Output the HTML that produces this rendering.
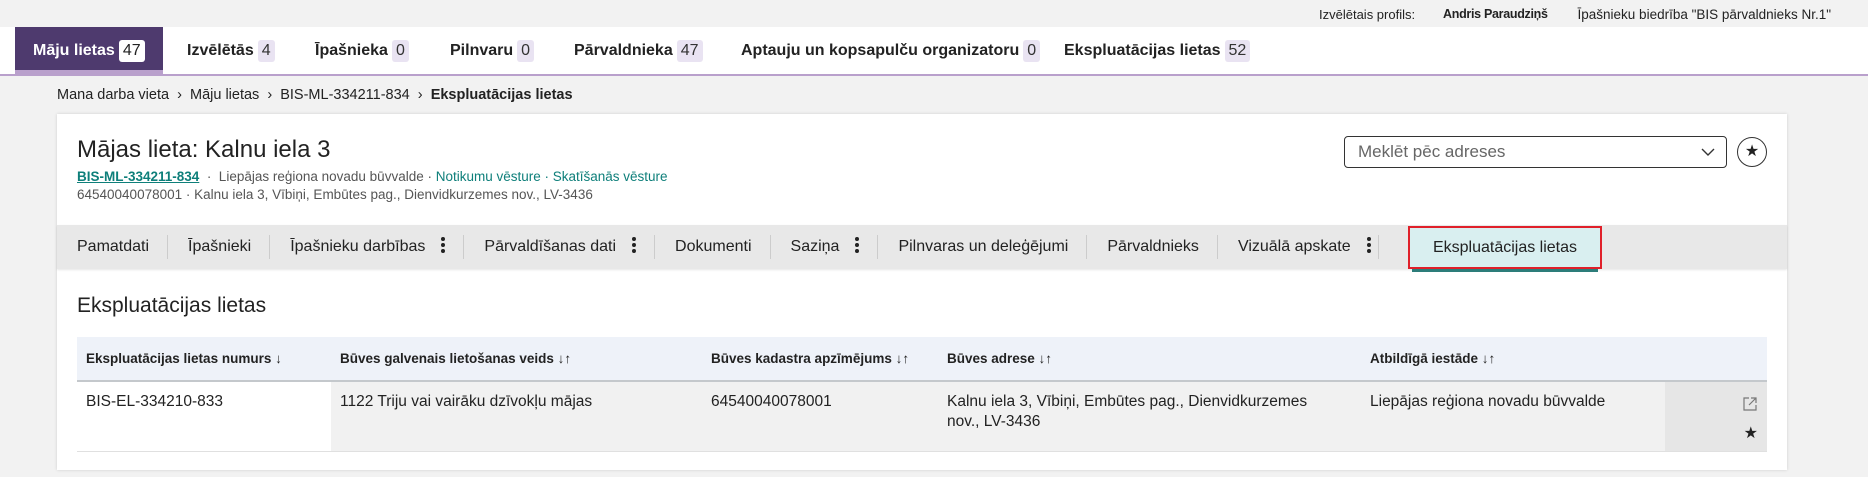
<!DOCTYPE html>
<html><head><meta charset="utf-8"><style>
*{box-sizing:border-box;margin:0;padding:0}
body{width:1868px;height:477px;background:#f2f2f2;font-family:"Liberation Sans",Arial,sans-serif;color:#222;position:relative;overflow:hidden}
.abs{position:absolute;white-space:nowrap}
#top{position:absolute;left:0;top:3px;width:1868px;height:24px;font-size:13px}
#nav{position:absolute;left:0;top:27px;width:1868px;height:49px;background:#fff;border-bottom:2px solid #b9a0cc}
.nt{position:absolute;top:0;height:47px;line-height:47px;font-size:16px;font-weight:bold;color:#222}
.b{display:inline-block;background:#e9e3f2;border-radius:3px;padding:0 4px;line-height:22px;font-weight:normal;margin-left:4px;color:#333}
.act{background:#4e3a6e;color:#fff;padding:0 18px;border-bottom:6px solid #b9a0cc;height:49px}
.act .b{background:#fff;color:#222}
#bc{left:57px;top:87px;font-size:14.5px}
#card{position:absolute;left:57px;top:114px;width:1730px;height:356px;background:#fff;box-shadow:0 0 3px rgba(0,0,0,.15)}
#tabs{position:absolute;left:0;top:111px;width:1730px;height:44px;background:#e8e8e8;display:flex;box-shadow:0 1px 2px rgba(0,0,0,.1)}
.tb{height:44px;line-height:44px;font-size:16px;padding:0 19px 0 20px;position:relative;color:#222}
.tb:after{content:"";position:absolute;right:0;top:10px;height:24px;border-right:1px solid #ccc}
.dots{display:inline-block;width:4px;margin-left:16px;vertical-align:middle;position:relative;top:-2px}
.dots i{display:block;width:4px;height:4px;border-radius:2px;background:#222;margin:2px 0}
table{position:absolute;left:20px;top:223px;width:1690px;border-collapse:collapse;font-size:15.5px;table-layout:fixed}
th{background:#eef2f9;height:44px;text-align:left;font-size:13.5px;padding-left:9px;border-bottom:2px solid #c4c8cc;font-weight:bold}
td{background:#f1f1f1;vertical-align:top;padding:10px 9px;height:70px;line-height:20px;border-bottom:1px solid #e0e0e0}
</style></head><body>
<div id="top">
<span class="abs" style="left:1319px;top:4px">Izvēlētais profils:</span>
<span class="abs" style="left:1443px;top:4px;font-weight:bold;font-size:12.5px;letter-spacing:-0.3px">Andris Paraudziņš</span>
<span class="abs" style="right:37px;top:4px;font-size:13.5px">Īpašnieku biedrība "BIS pārvaldnieks Nr.1"</span>
</div>
<div id="nav">
<div class="nt act" style="left:15px">Māju lietas<span class="b">47</span></div>
<div class="nt" style="left:187px">Izvēlētās<span class="b">4</span></div>
<div class="nt" style="left:315px">Īpašnieka<span class="b">0</span></div>
<div class="nt" style="left:450px">Pilnvaru<span class="b">0</span></div>
<div class="nt" style="left:574px">Pārvaldnieka<span class="b">47</span></div>
<div class="nt" style="left:741px">Aptauju un kopsapulču organizatoru<span class="b">0</span></div>
<div class="nt" style="left:1064px">Ekspluatācijas lietas<span class="b">52</span></div>
</div>
<div class="abs" id="bc">Mana darba vieta &nbsp;›&nbsp; Māju lietas &nbsp;›&nbsp; BIS-ML-334211-834 &nbsp;›&nbsp; <b>Ekspluatācijas lietas</b></div>
<div id="card">
<div class="abs" style="left:20px;top:22px;font-size:24px">Mājas lieta: Kalnu iela 3</div>
<div class="abs" style="left:20px;top:55px;font-size:13.5px;color:#555"><a style="color:#0e7f7a;font-weight:bold;text-decoration:underline">BIS-ML-334211-834</a> &nbsp;· &nbsp;Liepājas reģiona novadu būvvalde · <span style="color:#0e7f7a">Notikumu vēsture · Skatīšanās vēsture</span></div>
<div class="abs" style="left:20px;top:73px;font-size:13.5px;color:#555">64540040078001 · Kalnu iela 3, Vībiņi, Embūtes pag., Dienvidkurzemes nov., LV-3436</div>
<div class="abs" style="left:1287px;top:22px;width:383px;height:32px;border:1px solid #333;border-radius:4px;font-size:17px;color:#666;line-height:30px;padding-left:13px">Meklēt pēc adreses<svg style="position:absolute;right:11px;top:11px" width="14" height="9" viewBox="0 0 14 9"><path d="M1 1l6 6 6-6" fill="none" stroke="#333" stroke-width="1.4"/></svg></div>
<div class="abs" style="left:1680px;top:23px;width:30px;height:30px;border:1.5px solid #333;border-radius:50%;text-align:center;line-height:28px;font-size:16px">★</div>
<div id="tabs">
<div class="tb">Pamatdati</div>
<div class="tb">Īpašnieki</div>
<div class="tb">Īpašnieku darbības<span class="dots"><i></i><i></i><i></i></span></div>
<div class="tb">Pārvaldīšanas dati<span class="dots"><i></i><i></i><i></i></span></div>
<div class="tb">Dokumenti</div>
<div class="tb">Saziņa<span class="dots"><i></i><i></i><i></i></span></div>
<div class="tb">Pilnvaras un deleģējumi</div>
<div class="tb">Pārvaldnieks</div>
<div class="tb" style="padding-right:8px">Vizuālā apskate<span class="dots"><i></i><i></i><i></i></span></div>
</div>
<div class="abs" style="left:1351px;top:112px;width:194px;height:43px;background:#d9eff0;border:2px solid #e0202a;font-size:16px;line-height:39px;text-align:center">Ekspluatācijas lietas</div>
<div class="abs" style="left:1355px;top:155px;width:186px;height:3px;background:#2d7d7a"></div>
<div class="abs" style="left:20px;top:180px;font-size:21px">Ekspluatācijas lietas</div>
<table>
<colgroup><col style="width:254px"><col style="width:371px"><col style="width:236px"><col style="width:423px"><col style="width:304px"><col></colgroup>
<tr><th>Ekspluatācijas lietas numurs ↓</th><th>Būves galvenais lietošanas veids ↓↑</th><th>Būves kadastra apzīmējums ↓↑</th><th>Būves adrese ↓↑</th><th>Atbildīgā iestāde ↓↑</th><th></th></tr>
<tr><td style="background:#fff">BIS-EL-334210-833</td><td>1122 Triju vai vairāku dzīvokļu mājas</td><td>64540040078001</td><td style="padding-right:40px">Kalnu iela 3, Vībiņi, Embūtes pag., Dienvidkurzemes nov., LV-3436</td><td>Liepājas reģiona novadu būvvalde</td><td style="background:#e6e6e6;position:relative"><svg style="position:absolute;right:10px;top:15px" width="14" height="14" viewBox="0 0 14 14"><path d="M6 1H1v12h12V8M8 1h5v5M13 1L6 8" fill="none" stroke="#777" stroke-width="1.2"/></svg><span style="position:absolute;right:9px;top:42px;font-size:16px">★</span></td></tr>
</table>
</div>
</body></html>
